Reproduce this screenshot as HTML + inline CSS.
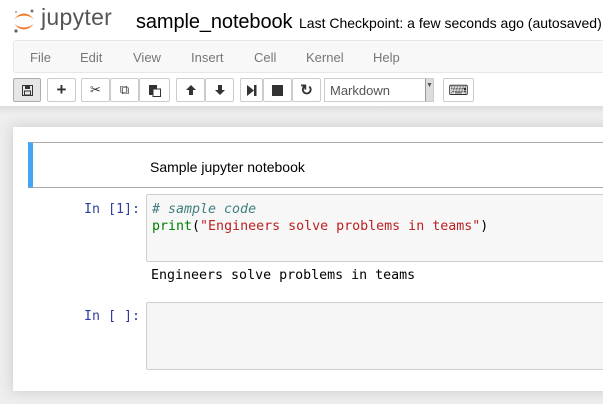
<!DOCTYPE html><html><head><style>
*{box-sizing:border-box;margin:0;padding:0}
body{width:603px;height:404px;overflow:hidden;background:#eee;font-family:"Liberation Sans",sans-serif;position:relative}
.a{position:absolute}
.btn{position:absolute;top:78px;height:24px;background:#fff;border:1px solid #ccc;border-radius:2px;display:flex;align-items:center;justify-content:center;font-size:13px;color:#333}
.mono{font-family:"DejaVu Sans Mono",monospace;font-size:13.3px}
</style></head><body>
<div class="a" style="left:0;top:0;width:603px;height:106px;background:#fff"></div>
<svg class="a" style="left:12px;top:7px" width="24" height="28" viewBox="0 0 24 28">
<path d="M2 12 Q12 1 22 12 Q12 5 2 12Z" fill="#f37726"/>
<path d="M2 17 Q12 28 22 17 Q12 24 2 17Z" fill="#f37726"/>
<circle cx="20" cy="4" r="1.5" fill="#767677"/><circle cx="4" cy="24" r="1.6" fill="#616262"/><circle cx="4" cy="5" r="1" fill="#989798"/>
</svg>
<div class="a" style="left:41px;top:4px;font-size:23px;color:#555;letter-spacing:0.3px">jupyter</div>
<div class="a" style="left:136px;top:11px;font-size:20px;color:#000;letter-spacing:-0.1px">sample_notebook</div>
<div class="a" style="left:299px;top:15px;font-size:14px;color:#000">Last Checkpoint: a few seconds ago (autosaved)</div>
<div class="a" style="left:13px;top:40px;width:600px;height:33px;background:#f8f8f8;border:1px solid #e7e7e7;border-radius:3px"></div>
<div class="a" style="top:50px;font-size:13px;color:#777;left:0;width:603px">
<span class="a" style="left:30px">File</span><span class="a" style="left:80px">Edit</span><span class="a" style="left:133px">View</span><span class="a" style="left:191px">Insert</span><span class="a" style="left:254px">Cell</span><span class="a" style="left:306px">Kernel</span><span class="a" style="left:373px">Help</span></div>
<div class="btn" style="left:13px;width:28px;background:#e6e6e6;border-color:#adadad"><svg width="11" height="11" viewBox="0 0 11 11"><rect x="0.5" y="0.5" width="10" height="10" fill="none" stroke="#333"/><rect x="3" y="1" width="5" height="3" fill="#333"/><rect x="2.5" y="6" width="6" height="4" fill="none" stroke="#333"/></svg></div>
<div class="btn" style="left:47px;width:29px;font-weight:bold;font-size:17px">+</div>
<div class="btn" style="left:81px;width:29px">✂</div>
<div class="btn" style="left:110px;width:29px">⧉</div>
<div class="btn" style="left:139px;width:31px"><svg width="12" height="13" viewBox="0 0 12 13"><rect x="0" y="1" width="8" height="10" fill="#333"/><rect x="4" y="5" width="7.5" height="7.5" fill="#fff" stroke="#333"/></svg></div>
<div class="btn" style="left:176px;width:29px"><svg width="12" height="12" viewBox="0 0 12 12"><path d="M6 1 L11 6 L8 6 L8 11 L4 11 L4 6 L1 6Z" fill="#333"/></svg></div>
<div class="btn" style="left:205px;width:29px"><svg width="12" height="12" viewBox="0 0 12 12"><path d="M6 11 L11 6 L8 6 L8 1 L4 1 L4 6 L1 6Z" fill="#333"/></svg></div>
<div class="btn" style="left:240px;width:23px"><svg width="10" height="11" viewBox="0 0 10 11"><path d="M0 0 L7 5.5 L0 11Z" fill="#333"/><rect x="7" y="0" width="2.5" height="11" fill="#333"/></svg></div>
<div class="btn" style="left:263px;width:29px"><div style="width:11px;height:11px;background:#333"></div></div>
<div class="btn" style="left:292px;width:29px;font-weight:bold;font-size:15px">↻</div>
<div class="btn" style="left:324px;width:110px;justify-content:flex-start;padding-left:5px;color:#555;border-radius:0">Markdown<div style="position:absolute;right:0;top:0;width:8px;height:22px;background:#ddd;border-left:1px solid #999;font-size:7px;text-align:center;line-height:14px">▼</div></div>
<div class="btn" style="left:443px;width:31px;font-size:14px">⌨</div>
<div class="a" style="left:0;top:106px;width:603px;height:8px;background:linear-gradient(#ddd,#eee)"></div>
<div class="a" style="left:13px;top:127px;width:600px;height:264px;background:#fff;box-shadow:0 0 12px 1px rgba(87,87,87,0.2)"></div>
<div class="a" style="left:28px;top:142px;width:590px;height:46px;border:1px solid #ababab;border-left:5px solid #42a5f5"></div>
<div class="a" style="left:150px;top:159px;font-size:14px;color:#000">Sample jupyter notebook</div>
<div class="a mono" style="left:84px;top:202px;color:#303f9f">In [1]:</div>
<div class="a" style="left:146px;top:194px;width:470px;height:68px;background:#f7f7f7;border:1px solid #cfcfcf;border-radius:2px"></div>
<div class="a mono" style="left:152px;top:202px;color:#408080;font-style:italic">#&nbsp;sample code</div>
<div class="a mono" style="left:152px;top:219px;white-space:pre"><span style="color:#008000">print</span>(<span style="color:#ba2121">"Engineers solve problems in teams"</span>)</div>
<div class="a mono" style="left:151px;top:268px;color:#000">Engineers solve problems in teams</div>
<div class="a mono" style="left:84px;top:309px;color:#303f9f;white-space:pre">In [ ]:</div>
<div class="a" style="left:146px;top:302px;width:470px;height:68px;background:#f5f5f5;border:1px solid #cfcfcf;border-radius:2px"></div>
</body></html>
